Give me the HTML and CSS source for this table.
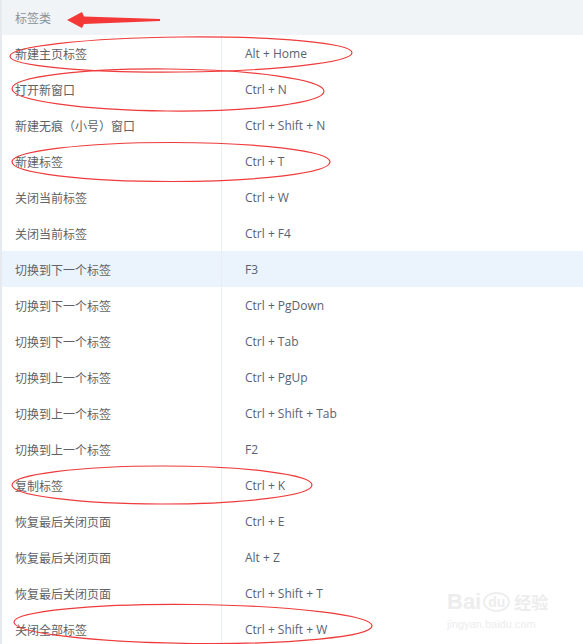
FILE: index.html
```html
<!DOCTYPE html>
<html lang="zh-CN">
<head>
    <meta charset="UTF-8">
    <title>标签类快捷键</title>
    <link rel="stylesheet" href="styles.css">
</head>
<body>
    <div class="sheet">
        <div class="sheet-head">标签类</div>
        <div class="row"><div class="cell-name">新建主页标签</div><div class="cell-key">Alt + Home</div></div>
        <div class="row"><div class="cell-name">打开新窗口</div><div class="cell-key">Ctrl + N</div></div>
        <div class="row"><div class="cell-name">新建无痕（小号）窗口</div><div class="cell-key">Ctrl + Shift + N</div></div>
        <div class="row"><div class="cell-name">新建标签</div><div class="cell-key">Ctrl + T</div></div>
        <div class="row"><div class="cell-name">关闭当前标签</div><div class="cell-key">Ctrl + W</div></div>
        <div class="row"><div class="cell-name">关闭当前标签</div><div class="cell-key">Ctrl + F4</div></div>
        <div class="row active"><div class="cell-name">切换到下一个标签</div><div class="cell-key">F3</div></div>
        <div class="row"><div class="cell-name">切换到下一个标签</div><div class="cell-key">Ctrl + PgDown</div></div>
        <div class="row"><div class="cell-name">切换到下一个标签</div><div class="cell-key">Ctrl + Tab</div></div>
        <div class="row"><div class="cell-name">切换到上一个标签</div><div class="cell-key">Ctrl + PgUp</div></div>
        <div class="row"><div class="cell-name">切换到上一个标签</div><div class="cell-key">Ctrl + Shift + Tab</div></div>
        <div class="row"><div class="cell-name">切换到上一个标签</div><div class="cell-key">F2</div></div>
        <div class="row"><div class="cell-name">复制标签</div><div class="cell-key">Ctrl + K</div></div>
        <div class="row"><div class="cell-name">恢复最后关闭页面</div><div class="cell-key">Ctrl + E</div></div>
        <div class="row"><div class="cell-name">恢复最后关闭页面</div><div class="cell-key">Alt + Z</div></div>
        <div class="row"><div class="cell-name">恢复最后关闭页面</div><div class="cell-key">Ctrl + Shift + T</div></div>
        <div class="row"><div class="cell-name">关闭全部标签</div><div class="cell-key">Ctrl + Shift + W</div></div>
    </div>

    <!-- hand-drawn red marks on top of the screenshot -->
    <svg class="marks" width="583" height="644" viewBox="0 0 583 644">
        <polygon points="67,20 82,12 84,16.5 160,19 160,21 84,24 82,28" fill="#f43838"/>
        <g fill="none" stroke="#ef3b3b" stroke-width="1.2">
            <ellipse cx="181" cy="54.5" rx="171" ry="17.5" transform="rotate(-0.6 181 54.5)"/>
            <ellipse cx="168" cy="90" rx="156" ry="21" transform="rotate(0.5 168 90)"/>
            <ellipse cx="171" cy="162" rx="159" ry="19.5"/>
            <ellipse cx="162" cy="485" rx="150" ry="19"/>
            <ellipse cx="193" cy="624" rx="179" ry="19.5" transform="rotate(0.6 193 624)"/>
        </g>
    </svg>

    <div class="watermark">
        <div class="wm-top"><span>Bai</span><span class="wm-paw">du</span><span class="wm-cn">经验</span></div>
        <div class="wm-url">jingyan.baidu.com</div>
    </div>
</body>
</html>
```

FILE: styles.css
```css
* { margin: 0; padding: 0; box-sizing: border-box; }
body { width: 583px; height: 644px; overflow: hidden; background: #fff; font-family: "Noto Sans CJK SC", "Noto Sans", sans-serif; font-size: 12px; position: relative; }
.sheet { border-left: 2px solid #e6eaee; }
.sheet-head { height: 35px; line-height: 35px; padding-left: 13px; background: #f0f4f7; color: #8a9096; }
.row { display: grid; grid-template-columns: 220px 1fr; height: 36px; line-height: 37px; }
.row.active { background: #ebf4fd; }
.cell-name { padding-left: 13px; color: #5f6266; border-right: 1px solid #e8eef2; }
.cell-key { padding-left: 23px; color: #5a6272; font-family: "Open Sans", "Noto Sans", sans-serif; }
.marks { position: absolute; top: 0; left: 0; pointer-events: none; }
.watermark { position: absolute; left: 447px; top: 590px; color: #ededed; font-family: "Liberation Sans", sans-serif; }
.wm-top { display: flex; align-items: flex-end; font-size: 22px; font-weight: bold; line-height: 24px; }
.wm-paw { font-size: 14px; border: 2px solid #ededed; border-radius: 50%; padding: 0 3px; line-height: 16px; margin: 0 2px 2px; }
.wm-cn { font-family: "Noto Sans CJK SC", sans-serif; font-size: 17px; margin-left: 2px; }
.wm-url { font-size: 11px; margin-top: 4px; }
```
